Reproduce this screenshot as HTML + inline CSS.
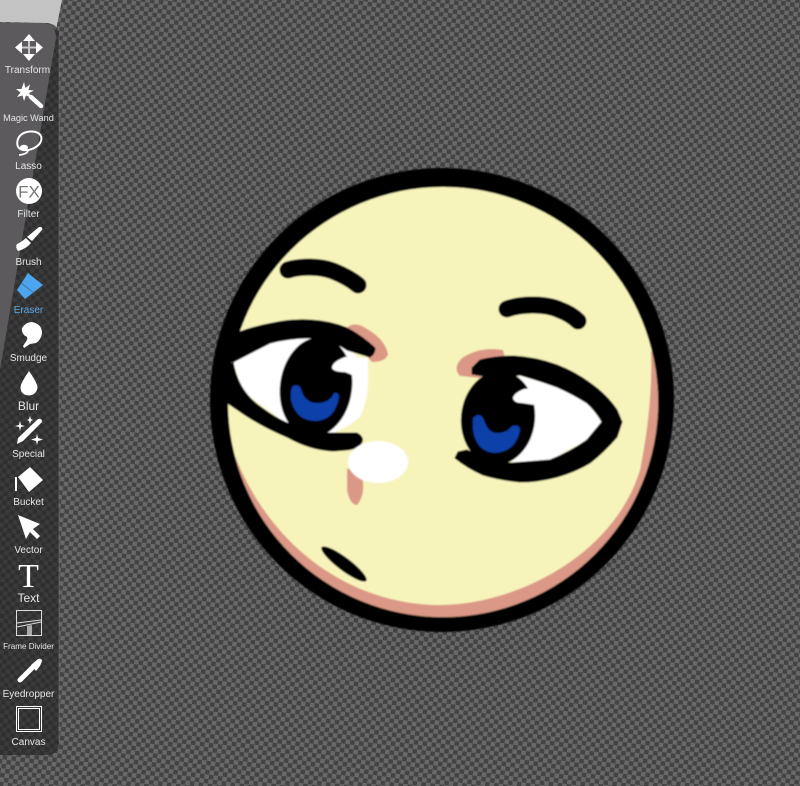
<!DOCTYPE html>
<html><head><meta charset="utf-8"><style>
html,body{margin:0;padding:0;width:800px;height:786px;overflow:hidden;background:#555}
svg{display:block}
text{font-family:"Liberation Sans",sans-serif;fill:#e6e6e6;text-anchor:middle;font-size:10px}
</style></head><body>
<svg width="800" height="786" viewBox="0 0 800 786" xmlns="http://www.w3.org/2000/svg">
<defs>
<pattern id="chk" width="9" height="9" patternUnits="userSpaceOnUse" patternTransform="rotate(8)">
<rect width="9" height="9" fill="#686868"/>
<rect width="4.500" height="4.500" fill="#434343"/>
<rect x="4.500" y="4.500" width="4.500" height="4.500" fill="#434343"/>
</pattern>
<clipPath id="inner"><circle cx="443" cy="402" r="215"/></clipPath>
<filter id="b"><feGaussianBlur stdDeviation=".8"/></filter>
<filter id="s"><feGaussianBlur stdDeviation=".35"/></filter>
</defs>
<rect width="800" height="786" fill="url(#chk)"/>
<polygon points="0,0 62,0 56,30 48,23 0,22" fill="#c3c3c3"/>
<path d="M0,23H47Q59,24 59,36V742Q59,755 46,755H0Z" fill="#262626" fill-opacity=".68"/>
<path d="M59,36V742" stroke="#777" stroke-width="1" opacity=".5"/>
<path d="M0,23H45Q56,25 56,38L0,370Z" fill="#5c5a5d"/>

<g filter="url(#b)">
<circle cx="442" cy="400" r="232" fill="#000"/>
<circle cx="443" cy="402" r="215" fill="#f7f4bb"/>
<path clip-path="url(#inner)" d="M651,352C652,380 650,420 640,470C612,560 510,605 440,605C350,605 262,545 228,436L205,500L300,640H600L680,500L670,340Z" fill="#dc9886"/>

<path d="M288,270C300,266 320,266 333,271C343,275 352,280 358,285" fill="none" stroke="#000" stroke-width="17" stroke-linecap="round"/>
<path d="M507,309C520,304 545,303 560,310C568,313 574,317 578,321" fill="none" stroke="#000" stroke-width="17" stroke-linecap="round"/>
<ellipse cx="344" cy="564" rx="28" ry="6.500" transform="rotate(37 344 564)" fill="#000"/>

<path d="M347,328Q352,322 362,326Q385,338 388,354Q386,362 372,362L352,340Z" fill="#dc9886"/>
<path d="M503,350Q480,346 462,358Q452,368 460,376L480,378L505,358Z" fill="#dc9886"/>
<path d="M347,468L362,476Q366,495 357,505Q350,505 347,490Z" fill="#dc9886"/>

<path d="M233,362L270,343L308,336L347,345L368,370L368,385Q366,405 360,417Q345,430 328,434L287,424L243,392Z" fill="#fff"/>
<ellipse cx="316" cy="387" rx="36" ry="50" transform="rotate(8 316 387)" fill="#000"/>
<path d="M293,386Q300,383 302,392Q306,403 317,403Q330,403 334,393Q339,392 339,397Q335,420 316,421Q296,421 291,400Q290,390 293,386Z" fill="#0f3fa8"/>
<path d="M345,357Q332,362 332,368Q334,372 345,372L352,375L368,380L368,358Z" fill="#fff"/>
<path d="M222,350L237,333Q255,326 273,323Q292,319 310,320Q330,321 347,328Q362,336 375,348Q375,354 370,357L347,350Q330,338 308,338Q290,338 270,343L233,362L226,360Z" fill="#000" stroke="#000" stroke-width="1" stroke-linejoin="round"/>
<path d="M222,380L233,362Q238,392 262,408Q274,417 287,423L328,433L357,433Q364,437 362,442Q358,449 346,450L333,451Q310,450 287,437Q265,428 245,415L226,402Z" fill="#000" stroke="#000" stroke-width="1" stroke-linejoin="round"/>
<ellipse cx="378" cy="462" rx="30" ry="21" fill="#fff"/>

<path d="M518,375L557,387L587,403L602,422L587,440L550,460L512,463L530,420Z" fill="#fff"/>
<ellipse cx="498" cy="418" rx="37" ry="47" transform="rotate(6 498 418)" fill="#000"/>
<path d="M473,418Q480,411 484,420Q488,433 497,433Q507,433 512,426Q520,424 520,430Q516,452 494,453Q476,451 473,430Z" fill="#0f3fa8"/>
<path d="M524,389Q514,393 513,398Q514,403 522,403L535,405L545,400L532,388Z" fill="#fff"/>
<path d="M472,368L480,360Q496,356 513,356Q535,357 557,365Q575,372 590,383Q607,395 617,410L622,422L602,422Q596,411 587,403Q573,394 557,387Q538,380 520,375L495,378L472,374Z" fill="#000" stroke="#000" stroke-width="1" stroke-linejoin="round"/>
<path d="M622,422L617,437Q604,452 590,463Q575,472 557,477Q538,482 520,482Q500,480 483,475Q467,468 455,458L458,452L467,450L490,462L512,463L550,460Q570,452 587,440L602,422Z" fill="#000" stroke="#000" stroke-width="1" stroke-linejoin="round"/>
</g>

<g filter="url(#s)">
<!-- Transform -->
<path d="M21,47.500H37M29,40V55" stroke="#c8c8c8" stroke-width="2"/>
<path d="M29,34L35,41H23Z M29,61L35,54H23Z M15,47.500L22,41.500V53.500Z M43,47.500L36,41.500V53.500Z" fill="#fff"/>
<text x="27.500" y="73">Transform</text>
<!-- Magic wand -->
<path d="M31,97L41,106" stroke="#fff" stroke-width="4.500" stroke-linecap="round"/>
<path d="M24,82L25.500,88L30,84.500L28.500,90L34,90.500L29,93L32,98L26,95.500L24,101L22.500,95.500L17,97L20.500,92.500L16,89L21.500,89Z" fill="#fff"/>
<text x="28.500" y="121" style="font-size:9.200px">Magic Wand</text>
<!-- Lasso -->
<path d="M30,131.500C38,131 43,135 41,141C39,147 30,151 23,150C18,149 16,145 18,139C20,134 25,132 30,131.500Z" fill="none" stroke="#fff" stroke-width="2"/>
<ellipse cx="24" cy="147.500" rx="4" ry="2.800" fill="#fff"/>
<path d="M19,155Q28,154 28,150" fill="none" stroke="#fff" stroke-width="1.800"/>
<text x="28.500" y="169">Lasso</text>
<!-- Filter -->
<circle cx="29" cy="191" r="13" fill="#fff"/>
<text x="29" y="197.500" style="font-size:17px;fill:#777">FX</text>
<text x="28.500" y="217">Filter</text>
<!-- Brush -->
<path d="M41,227Q43,228 42,230L32,241L27,237L39,227Z" fill="#fff"/>
<path d="M26,238L31,243Q26,249 18,251Q15,247 17,244Q20,243 26,238Z" fill="#fff"/>
<text x="28.500" y="265">Brush</text>
<!-- Eraser -->
<path d="M28,273L43,285L25,299L17,290Z" fill="#4ea5ee"/>
<path d="M21,283L34,293" stroke="#3a6f9e" stroke-width=".8"/>
<text x="28.500" y="313" style="fill:#5aa9e6">Eraser</text>
<!-- Smudge -->
<path d="M22,328Q26,322 32,322Q42,324 42,333Q41,340 36,343L30,344L24,348L23,346L27,340Q28,336 25,336Q21,332 22,328Z" fill="#fff"/>
<text x="28.500" y="361">Smudge</text>
<!-- Blur -->
<path d="M29,371Q38,384 37.500,388Q36,395 29,395.500Q21,395 20.500,388Q20,384 29,371Z" fill="#fff"/>
<text x="28.500" y="410" style="font-size:12px">Blur</text>
<!-- Special -->
<path d="M38,419Q42,418 42,422L23,441L17,444L18,438Z" fill="#fff"/>
<path d="M20,421L21,425L25,426L21,427L20,431L19,427L15,426L19,425Z M30,416L31,419L33,420L31,421L30,424L29,421L27,420L29,419Z M37,434L38,438L43,439.500L38,441L37,445L36,441L31,439.500L36,438Z" fill="#fff"/>
<text x="28.500" y="457">Special</text>
<!-- Bucket -->
<path d="M30,467L43,480L29,492L18,477Z" fill="#fff"/>
<path d="M16,477V491" stroke="#fff" stroke-width="2"/>
<text x="28.500" y="505">Bucket</text>
<!-- Vector -->
<path d="M18,515L40,524L33,529L40,536L37,539L30,532L26,539Z" fill="#fff"/>
<text x="28.500" y="553">Vector</text>
<!-- Text -->
<text x="28.500" y="587" style="font-family:'Liberation Serif',serif;font-size:34px;fill:#fff">T</text>
<text x="28.500" y="602" style="font-size:12px">Text</text>
<!-- Frame divider -->
<rect x="16.500" y="610.500" width="25" height="25" fill="none" stroke="#ddd" stroke-width="1"/>
<path d="M17,623L41,620M17,627L41,622" stroke="#ddd" stroke-width="1"/>
<path d="M27,626L32,625V635H27Z" fill="#aaa"/>
<text x="28.500" y="649" style="font-size:8.100px">Frame Divider</text>
<!-- Eyedropper -->
<path d="M20,680L33,667" stroke="#fff" stroke-width="5" stroke-linecap="round"/>
<path d="M31,665L38,659Q42,658 42,661L40,666L36,671Z" fill="#fff"/>
<text x="28.500" y="697">Eyedropper</text>
<!-- Canvas -->
<rect x="16.500" y="706.500" width="25" height="25" fill="none" stroke="#fff" stroke-width="1"/>
<rect x="18.500" y="708.500" width="21" height="21" fill="none" stroke="#fff" stroke-width="1"/>
<text x="28.500" y="745">Canvas</text>
</g>
</svg>
</body></html>
